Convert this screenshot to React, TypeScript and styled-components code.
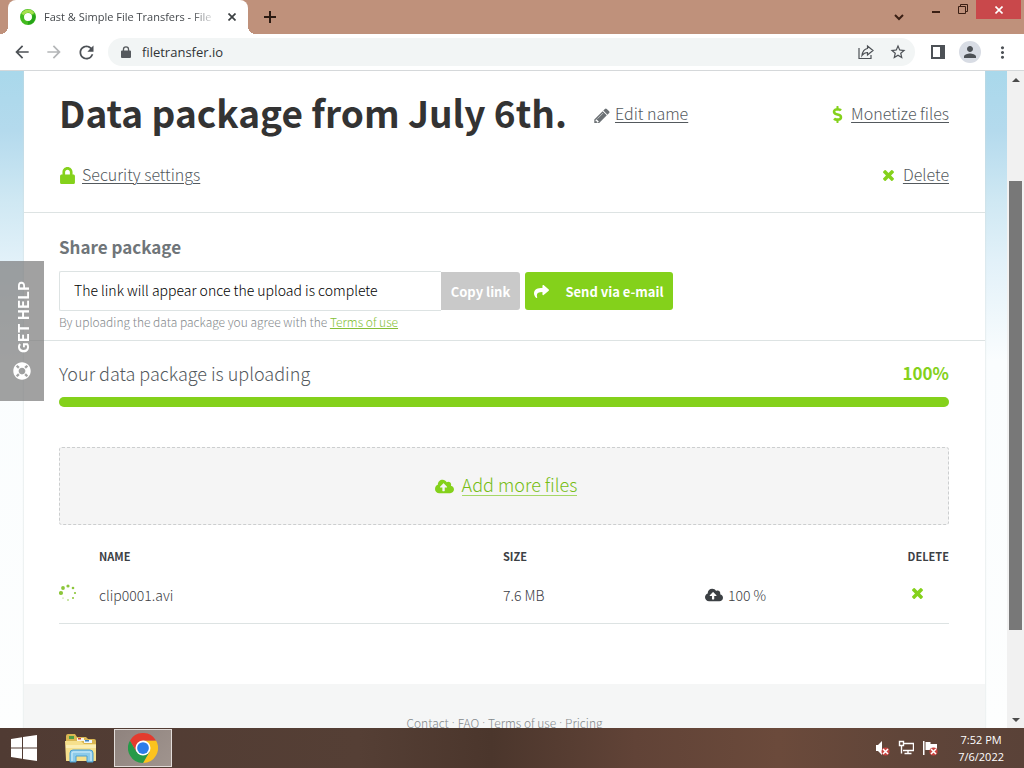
import React from "react";
import styled, { createGlobalStyle, css } from "styled-components";
import {
  FaLock,
  FaDollarSign,
  FaShare,
  FaCloudUploadAlt,
  FaLifeRing,
} from "react-icons/fa";
import {
  MdArrowBack,
  MdArrowForward,
  MdRefresh,
  MdStarBorder,
  MdPerson,
  MdMoreVert,
} from "react-icons/md";

const uiFont = `"Open Sans", "Noto Sans", sans-serif`;
const pageFont = `"Noto Sans CJK SC", "Noto Sans", sans-serif`;
const green = "#84d11b";
const line = "#dde3e3";

const GlobalStyle = createGlobalStyle`
  * { box-sizing: border-box; }
  body { margin: 0; background: #fff; font-family: ${uiFont}; }
  button, input { font: inherit; color: inherit; }
  button { border: 0; padding: 0; background: none; display: inline-flex; align-items: center; justify-content: center; }
  svg { display: block; flex: none; }
`;

const Desktop = styled.div`
  display: flex;
  flex-direction: column;
  height: 100vh;
  overflow: hidden;
`;

/* Browser frame */

const TitleBar = styled.header`
  display: flex;
  align-items: flex-start;
  height: 34px;
  flex: none;
  padding-left: 8px;
  background: #bf917b;
  color: #3a1f14;
`;

const Tab = styled.div`
  position: relative;
  display: flex;
  align-items: center;
  width: 240px;
  height: 34px;
  padding: 0 8px 0 12px;
  border-radius: 8px 8px 0 0;
  background: #fff;
  color: #45494d;

  &::before,
  &::after {
    content: "";
    position: absolute;
    bottom: 0;
    width: 8px;
    height: 8px;
  }
  &::before {
    left: -8px;
    background: radial-gradient(circle at 0 0, #bf917b 8px, #fff 8px);
  }
  &::after {
    right: -8px;
    background: radial-gradient(circle at 100% 0, #bf917b 8px, #fff 8px);
  }
`;

const TabTitle = styled.span`
  flex: 1;
  min-width: 0;
  margin-left: 8px;
  overflow: hidden;
  white-space: nowrap;
  font-size: 11px;
  line-height: 16px;
  padding-bottom: 1px;
  mask-image: linear-gradient(90deg, #000 86%, transparent);
`;

const TabButton = styled.button`
  width: 16px;
  height: 16px;
  margin-left: 8px;
  color: #3c4043;
`;

const NewTab = styled.button`
  width: 28px;
  height: 34px;
  margin-left: 8px;
  color: #2b1a12;
`;

const WindowControls = styled.div`
  display: flex;
  align-items: flex-start;
  margin-left: auto;
  padding-right: 3px;
`;

const WindowButton = styled.button<{ $width: number; $height: number; $close?: boolean }>`
  width: ${(p) => p.$width}px;
  height: ${(p) => p.$height}px;
  ${(p) =>
    p.$close &&
    css`
      background: #c9484b;
      color: #fff;
    `}
`;

const Toolbar = styled.nav`
  display: flex;
  align-items: center;
  height: 37px;
  flex: none;
  padding: 0 6px;
  background: #fff;
  border-bottom: 1px solid #d5d8da;
`;

const ToolButton = styled.button<{ $muted?: boolean }>`
  width: 32px;
  height: 32px;
  color: ${(p) => (p.$muted ? "#b4b6b8" : "#4d5156")};
`;

const AddressBar = styled.div`
  display: flex;
  align-items: center;
  flex: 1;
  height: 28px;
  margin: 0 7px 0 6px;
  padding: 0 1px 0 13px;
  border-radius: 14px;
  background: #f2f5f5;
  color: #55595d;
`;

const AddressInput = styled.input`
  flex: 1;
  min-width: 0;
  margin-left: 11px;
  padding: 0;
  border: 0;
  outline: 0;
  background: none;
  color: #303336;
  font-size: 13px;
`;

const Avatar = styled.span`
  display: flex;
  align-items: center;
  justify-content: center;
  width: 22px;
  height: 22px;
  border-radius: 50%;
  background: #d8dce4;
`;

/* Web page */

const Viewport = styled.div`
  position: relative;
  display: flex;
  flex: 1;
  min-height: 0;
`;

const Page = styled.div`
  flex: 1;
  min-width: 0;
  overflow: hidden;
  padding: 0 22px 0 24px;
  background: linear-gradient(#a9d8eb 0, #b4daed 60px, #cfe8f3 130px, #e2f1f9 190px, #fafdfe 290px, #fdfefe 100%);
  font-family: ${pageFont};
  font-weight: 300;
  color: #53595d;
`;

const Card = styled.main`
  background: #fff;
  box-shadow: 0 0 2px #cfd8da;
`;

const Section = styled.section<{ $pad: string; $last?: boolean }>`
  padding: ${(p) => p.$pad};
  border-bottom: ${(p) => (p.$last ? "0" : `1px solid ${line}`)};
`;

const Row = styled.div<{ $height: number }>`
  display: flex;
  align-items: center;
  height: ${(p) => p.$height}px;
`;

const Title = styled.h1`
  align-self: flex-start;
  margin: 0 26px 0 0;
  color: #333;
  font-size: 37px;
  font-weight: 700;
  line-height: 56px;
  white-space: nowrap;
`;

const IconLink = styled.a<{ $end?: boolean; $gap: number }>`
  display: flex;
  align-items: center;
  gap: ${(p) => p.$gap}px;
  margin-left: ${(p) => (p.$end ? "auto" : "0")};
  color: #53595d;
  font-size: 16px;
  line-height: 24px;
  text-decoration: none;

  span {
    padding-bottom: 2px;
    text-decoration: underline;
    text-decoration-thickness: 1px;
    text-underline-offset: 2px;
  }
`;

const Subtitle = styled.h2`
  margin: 0 0 11px;
  color: #6f7579;
  font-size: 17px;
  font-weight: 700;
  line-height: 27px;
`;

const ShareRow = styled.form`
  display: flex;
  align-items: center;
  height: 40px;
`;

const ShareInput = styled.input`
  width: 382px;
  height: 40px;
  padding: 0 14px 2px;
  border: 1px solid ${line};
  border-right: 0;
  border-radius: 2px 0 0 2px;
  background: #fff;
  color: #000;
  font-size: 14px;
`;

const CopyButton = styled.button`
  width: 79px;
  height: 38px;
  border-radius: 0 3px 3px 0;
  background: #c9c9c9;
  color: #fff;
  font-size: 13px;
  font-weight: 700;
`;

const SendButton = styled.button`
  width: 148px;
  height: 38px;
  margin-left: 5px;
  gap: 16px;
  border-radius: 3px;
  background: ${green};
  color: #fff;
  font-size: 13px;
  font-weight: 700;
`;

const Note = styled.p`
  margin: 0;
  padding-bottom: 2px;
  color: #84898c;
  font-size: 12px;
  line-height: 22px;

  a {
    color: #84bf36;
  }
`;

const Status = styled.div`
  display: flex;
  justify-content: space-between;
  margin-bottom: 10px;
  font-size: 18px;
  line-height: 28px;

  strong {
    color: ${green};
    font-size: 17px;
    font-weight: 700;
  }
`;

const Progress = styled.div`
  height: 10px;
  margin-bottom: 40px;
  border-radius: 5px;
  background: #e8e8e8;
`;

const ProgressFill = styled.div`
  height: 100%;
  border-radius: 5px;
  background: ${green};
`;

const DropArea = styled.div`
  display: flex;
  align-items: center;
  justify-content: center;
  height: 78px;
  margin-bottom: 17px;
  border: 1px dashed #cccecf;
  border-radius: 3px;
  background: #f5f5f5;
`;

const AddLink = styled.a`
  display: flex;
  align-items: center;
  gap: 8px;
  margin-left: 4px;
  color: #76bd14;
  font-size: 18px;
  text-decoration: none;

  svg {
    color: ${green};
  }
  span {
    margin-bottom: 3px;
    border-bottom: 1px solid #a5d765;
    line-height: 22px;
  }
`;

const Files = styled.table`
  width: 100%;
  table-layout: fixed;
  border-collapse: collapse;
  color: #3c4044;
  font-size: 14px;

  th,
  td {
    padding: 0;
    text-align: left;
  }
  th {
    height: 28px;
    font-size: 11px;
    font-weight: 700;
  }
  td {
    height: 53px;
    padding-bottom: 3px;
    border-bottom: 1px solid ${line};
  }
  td:first-child,
  td:last-child {
    padding-bottom: 7px;
  }
  th:last-child,
  td:last-child {
    text-align: right;
  }
`;

const Col = styled.col<{ $width?: number }>`
  width: ${(p) => (p.$width ? `${p.$width}px` : "auto")};
`;

const Uploaded = styled.span`
  display: flex;
  align-items: center;
  gap: 5px;
`;

const DeleteButton = styled.button`
  width: 14px;
  height: 14px;
  margin-right: 25px;
`;

const Footer = styled.footer`
  display: flex;
  justify-content: center;
  gap: 3px;
  height: 120px;
  padding-top: 28px;
  background: #f5f6f6;
  color: #84898c;
  font-size: 12px;
  line-height: 22px;

  a {
    color: inherit;
    text-decoration: none;
  }
`;

const Dot = styled.span`
  font-family: ${uiFont};
`;

const HelpTab = styled.button`
  position: absolute;
  left: 0;
  top: 190px;
  width: 44px;
  height: 140px;
  gap: 9px;
  padding-top: 2px;
  writing-mode: vertical-rl;
  transform: rotate(180deg);
  background: rgba(125, 125, 125, 0.72);
  color: #fff;
  font-family: ${pageFont};
  font-size: 15px;
  font-weight: 700;
`;

const Scrollbar = styled.div`
  display: flex;
  flex-direction: column;
  align-items: center;
  width: 17px;
  flex: none;
  background: #f1f1f1;
`;

const ScrollArrow = styled.button`
  width: 17px;
  height: 17px;
  color: #4b4b4b;
`;

const Track = styled.div`
  display: flex;
  flex: 1;
  flex-direction: column;
  width: 13px;

  &::before {
    content: "";
    flex: 15;
  }
  &::after {
    content: "";
    flex: 13;
  }
`;

const Thumb = styled.div`
  flex: 72;
  background: #787878;
`;

/* Taskbar */

const Taskbar = styled.footer`
  display: flex;
  align-items: center;
  height: 40px;
  flex: none;
  padding-right: 20px;
  background: linear-gradient(90deg, #503b33 0, #553f35 35%, #4b362c 48%, #614337 62%, #6b4a3b 76%, #604539 88%, #5a4238 100%);
  color: #fff;
`;

const TaskButton = styled.button<{ $width: number; $active?: boolean }>`
  width: ${(p) => p.$width}px;
  height: 38px;
  ${(p) =>
    p.$active &&
    css`
      border: 1px solid #e2dcd9;
      background: linear-gradient(135deg, #8f837e, #a0948e);
    `}
`;

const Tray = styled.div`
  display: flex;
  align-items: center;
  gap: 8px;
  margin-left: auto;
`;

const Clock = styled.div`
  margin-left: 12px;
  font-size: 11px;
  line-height: 17px;
  text-align: center;
`;

const Cross = ({ size }: { size: number }) => (
  <svg width={size} height={size} viewBox="300 270 1192 1192" fill={green}>
    <path
      d="M1490 1322q0 40-28 68l-136 136q-28 28-68 28t-68-28l-294-294-294 294q-28 28-68 28t-68-28l-136-136q-28-28-28-68t28-68l294-294-294-294q-28-28-28-68t28-68l136-136q28-28 68-28t68 28l294 294 294-294q28-28 68-28t68 28l136 136q28 28 28 68t-28 68l-294 294 294 294q28 28 28 68z"
      transform="translate(0 -94)"
    />
  </svg>
);

const Pencil = () => (
  <svg width="18" height="18" viewBox="0 -200 1792 1792" fill="#6b7074">
    <path d="M491 1536l91-91-235-235-91 91v107h128v128h107zm523-928q0-22-22-22-10 0-17 7l-542 542q-7 7-7 17 0 22 22 22 10 0 17-7l542-542q7-7 7-17zm-54-192l416 416-832 832h-416v-416zm683 96q0 53-37 90l-166 166-416-416 166-165q36-38 90-38 53 0 91 38l235 234q37 39 37 91z" />
  </svg>
);

const Favicon = () => (
  <svg width="16" height="16" viewBox="0 0 16 16" fill="none">
    <circle cx="8" cy="8" r="6" stroke="#43bb20" strokeWidth="4" />
    <path d="M2.6 5.5A6 6 0 0 1 13 4.8" stroke="#a6e04e" strokeWidth="3" />
    <path d="M13.5 6A6 6 0 0 1 8 14" stroke="#25a318" strokeWidth="3" />
  </svg>
);

const spinnerDots = [
  [9, 2, 1.6],
  [14, 4, 1.3],
  [16, 9, 1.1],
  [14, 14, 1],
  [9, 16, 0.8],
  [4, 14, 0.6],
  [2, 9, 2.1],
  [4, 4, 1.9],
];

const Spinner = () => (
  <svg width="18" height="18" viewBox="0 0 18 18" fill="#8cc63a">
    {spinnerDots.map(([x, y, r]) => (
      <circle key={`${x}-${y}`} cx={x} cy={y} r={r} />
    ))}
  </svg>
);

const WindowsLogo = () => (
  <svg width="26" height="26" viewBox="0 0 26 26" fill="#fff">
    <path d="M0 4 11 2.2V12.4H0zM12 2 26 0v12.4H12zM0 13.4h11v10.4L0 22zM12 13.4h14V26l-14-2.1z" />
  </svg>
);

const Explorer = () => (
  <svg width="34" height="30" viewBox="0 0 34 30">
    <path d="M2 3q0-2 2-2h7l2 3h9l2 2h6q2 0 2 2v20H2z" fill="#d9b652" />
    <path d="M5 3h5v3H5z" fill="#4e9c45" />
    <path d="M13 5h7v3h-7z" fill="#f8f5e8" />
    <path d="M14 5h3v1.5h-3z" fill="#cf4636" />
    <path d="M20 7h8v3h-8z" fill="#eef6fc" />
    <path d="M21 7h4v1.5h-4z" fill="#3c80bd" />
    <path d="M1 8h16l3 3h12v16q0 1-1 1H3q-1 0-1-1z" fill="#f6e08d" />
    <path d="M2 12h30v3H2z" fill="#fbeeb4" />
    <path d="M6 29V20q0-3 3-3h17q3 0 3 3v9h-6v-6H12v6z" fill="#8ccbea" stroke="#4a9fd0" />
    <path d="M8 28v-8q0-1 1-1h17q1 0 1 1v8" fill="none" stroke="#d8f1fc" />
  </svg>
);

const ChromeLogo = () => (
  <svg width="30" height="30" viewBox="0 0 48 48">
    <path d="M24 24V12h20.8A24 24 0 0 1 24 48l10.4-18z" fill="#fcc31e" />
    <path d="M24 24l10.4 6L24 48A24 24 0 0 1 3.2 12l10.4 18z" fill="#269a48" />
    <path d="M3.2 12 13.6 30 24 12h20.8A24 24 0 0 0 3.2 12z" fill="#e33b2e" />
    <circle cx="24" cy="24" r="12" fill="#fff" />
    <circle cx="24" cy="24" r="9.4" fill="#2c7de9" />
  </svg>
);

const RedCross = () => (
  <>
    <circle cx="11.5" cy="11.5" r="4" fill="#c8433f" />
    <path d="m9 9 5 5m0-5-5 5" stroke="#fff" strokeWidth="1.5" />
  </>
);

export default function App() {
  return (
    <Desktop>
      <GlobalStyle />
      <TitleBar>
        <Tab>
          <Favicon />
          <TabTitle>Fast &amp; Simple File Transfers - File</TabTitle>
          <TabButton aria-label="Close tab">
            <svg width="8" height="8" viewBox="0 0 8 8" stroke="currentColor" strokeWidth="1.7">
              <path d="m.5.5 7 7m0-7-7 7" />
            </svg>
          </TabButton>
        </Tab>
        <NewTab aria-label="New tab">
          <svg width="12" height="12" viewBox="0 0 12 12" stroke="currentColor" strokeWidth="2">
            <path d="M6 0v12M0 6h12" />
          </svg>
        </NewTab>
        <WindowControls>
          <WindowButton $width={46} $height={34} aria-label="Search tabs">
            <svg width="10" height="7" viewBox="0 0 10 7" fill="none" stroke="currentColor" strokeWidth="2">
              <path d="m1 1 4 4 4-4" />
            </svg>
          </WindowButton>
          <WindowButton $width={28} $height={24} aria-label="Minimize">
            <svg width="8" height="2" viewBox="0 0 8 2" fill="currentColor">
              <path d="M0 0h8v2H0z" />
            </svg>
          </WindowButton>
          <WindowButton $width={26} $height={18} aria-label="Restore">
            <svg width="10" height="10" viewBox="0 0 10 10" fill="none" stroke="currentColor">
              <path d="M.5 2.5h7v7h-7zM2.5 2V.5h7v7H8" />
            </svg>
          </WindowButton>
          <WindowButton $width={45} $height={19} $close aria-label="Close">
            <svg width="8" height="8" viewBox="0 0 8 8" stroke="currentColor" strokeWidth="1.6">
              <path d="m.5.5 7 7m0-7-7 7" />
            </svg>
          </WindowButton>
        </WindowControls>
      </TitleBar>

      <Toolbar>
        <ToolButton aria-label="Back"><MdArrowBack size={20} /></ToolButton>
        <ToolButton $muted aria-label="Forward"><MdArrowForward size={20} /></ToolButton>
        <ToolButton aria-label="Reload"><MdRefresh size={21} /></ToolButton>
        <AddressBar>
          <svg width="10" height="12" viewBox="0 0 10 12" fill="currentColor">
            <path d="M1.800 4.500V3.500a3.200 3.200 0 0 1 6.400 0v1H9q1 0 1 1V11q0 1-1 1H1q-1 0-1-1V5.500q0-1 1-1zM3.100 4.500h3.800v-1a1.900 1.900 0 0 0-3.800 0z" />
          </svg>
          <AddressInput aria-label="Address" defaultValue="filetransfer.io" />
          <ToolButton aria-label="Share">
            <svg width="16" height="16" viewBox="0 0 16 16" fill="none" stroke="currentColor" strokeWidth="1.2">
              <path d="M1 4v10.500h12V11" />
              <path d="M9.500 2 15 6.500 9.500 11V8.500C7 8.500 5.500 9.500 4 11.500 4.500 7.500 6.500 5 9.500 4.500z" />
            </svg>
          </ToolButton>
          <ToolButton aria-label="Bookmark"><MdStarBorder size={18} /></ToolButton>
        </AddressBar>
        <ToolButton aria-label="Side panel">
          <svg width="14" height="14" viewBox="0 0 14 14" fill="currentColor">
            <path fillRule="evenodd" d="M0 0h14v14H0zM2 2v10h7V2z" />
          </svg>
        </ToolButton>
        <ToolButton aria-label="Profile">
          <Avatar><MdPerson size={18} /></Avatar>
        </ToolButton>
        <ToolButton aria-label="Menu"><MdMoreVert size={19} /></ToolButton>
      </Toolbar>

      <Viewport>
        <Page>
          <Card>
            <Section $pad="13px 36px 6px 35px">
              <Row $height={60}>
                <Title>Data package from July 6th.</Title>
                <IconLink href="#" $gap={4}>
                  <Pencil />
                  <span>Edit name</span>
                </IconLink>
                <IconLink href="#" $gap={5} $end>
                  <FaDollarSign size={17} color={green} />
                  <span>Monetize files</span>
                </IconLink>
              </Row>
              <Row $height={62}>
                <IconLink href="#" $gap={6}>
                  <FaLock size={17} color={green} />
                  <span>Security settings</span>
                </IconLink>
                <IconLink href="#" $gap={9} $end>
                  <Cross size={11} />
                  <span>Delete</span>
                </IconLink>
              </Row>
            </Section>

            <Section $pad="20px 36px 5px 35px">
              <Subtitle>Share package</Subtitle>
              <ShareRow>
                <ShareInput aria-label="Package link" readOnly value="The link will appear once the upload is complete" />
                <CopyButton type="button">Copy link</CopyButton>
                <SendButton type="button">
                  <FaShare size={15} />
                  Send via e-mail
                </SendButton>
              </ShareRow>
              <Note>
                By uploading the data package you agree with the <a href="#">Terms of use</a>
              </Note>
            </Section>

            <Section $pad="18px 36px 60px 35px" $last>
              <Status>
                <span>Your data package is uploading</span>
                <strong>100%</strong>
              </Status>
              <Progress role="progressbar" aria-label="Upload" aria-valuenow={100}>
                <ProgressFill style={{ width: "100%" }} />
              </Progress>
              <DropArea>
                <AddLink href="#">
                  <FaCloudUploadAlt size={19} />
                  <span>Add more files</span>
                </AddLink>
              </DropArea>
              <Files>
                <colgroup>
                  <Col $width={40} />
                  <Col />
                  <Col $width={202} />
                  <Col $width={202} />
                  <Col $width={42} />
                </colgroup>
                <thead>
                  <tr>
                    <th />
                    <th>NAME</th>
                    <th>SIZE</th>
                    <th />
                    <th>DELETE</th>
                  </tr>
                </thead>
                <tbody>
                  <tr>
                    <td><Spinner /></td>
                    <td>clip0001.avi</td>
                    <td>7.6 MB</td>
                    <td>
                      <Uploaded>
                        <FaCloudUploadAlt size={18} />
                        100 %
                      </Uploaded>
                    </td>
                    <td>
                      <DeleteButton aria-label="Delete clip0001.avi"><Cross size={11} /></DeleteButton>
                    </td>
                  </tr>
                </tbody>
              </Files>
            </Section>

            <Footer>
              <a href="#">Contact</a>
              <Dot>·</Dot>
              <a href="#">FAQ</a>
              <Dot>·</Dot>
              <a href="#">Terms of use</a>
              <Dot>·</Dot>
              <a href="#">Pricing</a>
            </Footer>
          </Card>
        </Page>
        <HelpTab>
          <FaLifeRing size={18} />
          GET HELP
        </HelpTab>
        <Scrollbar>
          <ScrollArrow aria-label="Scroll up">
            <svg width="8" height="4" viewBox="0 0 8 4" fill="currentColor"><path d="M0 4 4 0l4 4z" /></svg>
          </ScrollArrow>
          <Track><Thumb /></Track>
          <ScrollArrow aria-label="Scroll down">
            <svg width="8" height="4" viewBox="0 0 8 4" fill="currentColor"><path d="m0 0 4 4 4-4z" /></svg>
          </ScrollArrow>
        </Scrollbar>
      </Viewport>

      <Taskbar>
        <TaskButton $width={48} aria-label="Start"><WindowsLogo /></TaskButton>
        <TaskButton $width={66} aria-label="File Explorer"><Explorer /></TaskButton>
        <TaskButton $width={58} $active aria-label="Chrome"><ChromeLogo /></TaskButton>
        <Tray>
          <svg width="16" height="16" viewBox="0 0 16 16" fill="#fff">
            <path d="M2 5h2l4-4v14l-4-4H2z" />
            <RedCross />
          </svg>
          <svg width="16" height="16" viewBox="0 0 16 16" fill="none" stroke="#fff">
            <path d="M5 3.500h10.500v7H5M10 11v2.500M6.500 13.500h7" strokeWidth="1.4" />
            <path d="M1.500 1.500h4v4h-4zM3.500 5.500v8" strokeWidth="1.400" />
          </svg>
          <svg width="16" height="16" viewBox="0 0 16 16" fill="#fff">
            <path d="M1 1h1.500v14H1zM3.500 2h5v2H15v6H3.500z" />
            <RedCross />
          </svg>
          <Clock>
            <div>7:52 PM</div>
            <div>7/6/2022</div>
          </Clock>
        </Tray>
      </Taskbar>
    </Desktop>
  );
}
